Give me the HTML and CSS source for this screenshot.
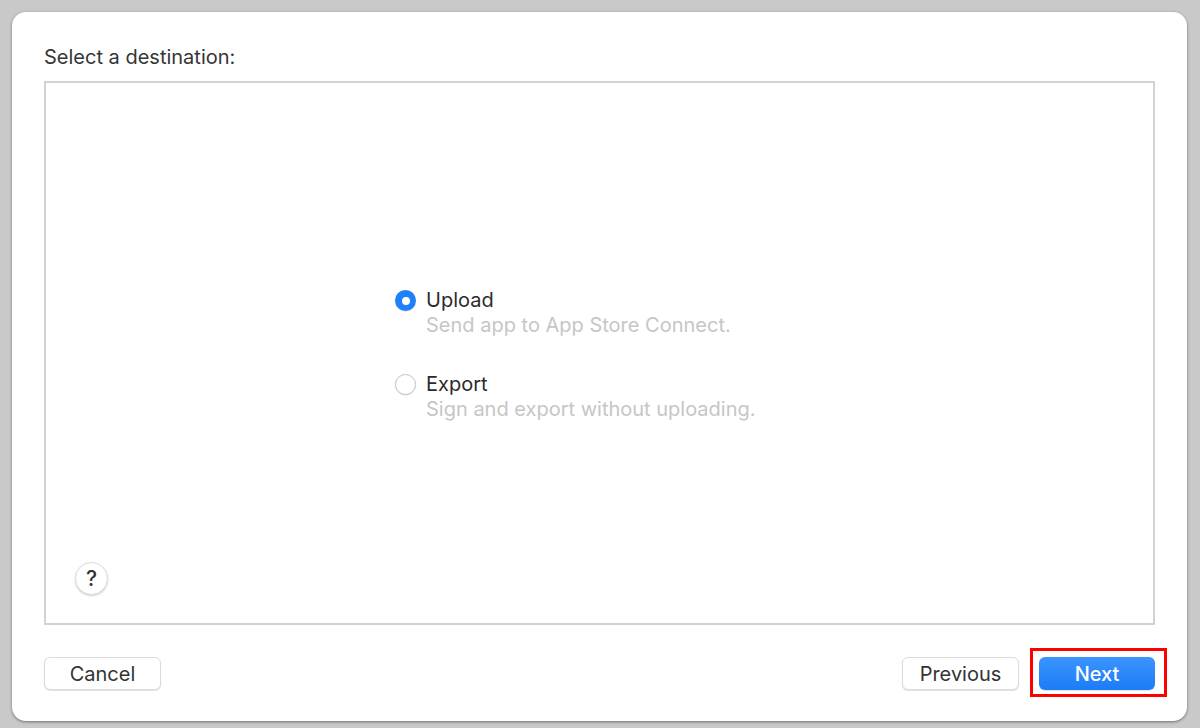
FILE: index.html
```html
<!DOCTYPE html>
<html lang="en">
<head>
<meta charset="UTF-8">
<title>Select a destination</title>
<link rel="stylesheet" href="styles.css">
</head>
<body>
<div class="dialog">
    <div class="title">Select a destination:</div>
    <div class="panel">
        <div class="options">
            <div class="option">
                <span class="radio checked"></span>
                <div class="option-text">
                    <div class="option-label">Upload</div>
                    <div class="option-sub">Send app to App Store Connect.</div>
                </div>
            </div>
            <div class="option">
                <span class="radio"></span>
                <div class="option-text">
                    <div class="option-label">Export</div>
                    <div class="option-sub">Sign and export without uploading.</div>
                </div>
            </div>
        </div>
        <button class="help" type="button">?</button>
    </div>
    <div class="footer">
        <button class="btn" type="button">Cancel</button>
        <div class="footer-right">
            <button class="btn" type="button">Previous</button>
            <span class="highlight"><button class="btn primary" type="button">Next</button></span>
        </div>
    </div>
</div>
</body>
</html>
```

FILE: styles.css
```css
body {
    margin: 0;
    height: 728px;
    box-sizing: border-box;
    padding: 12px 13px 7px 12px;
    background: #c9c9c9;
    font-family: Inter, "Liberation Sans", sans-serif;
    color: #2b2b2b;
}
.dialog {
    height: 709px;
    box-sizing: border-box;
    background: #fff;
    border-radius: 14px;
    box-shadow: 0 1px 3px rgba(0, 0, 0, 0.45);
    padding: 34px 32px 0 32px;
    display: flex;
    flex-direction: column;
}
.title {
    font-size: 20px;
    line-height: 22px;
    color: #363636;
    margin-bottom: 13px;
}
.panel {
    height: 544px;
    box-sizing: border-box;
    border: 2px solid #d2d2d2;
    display: flex;
    flex-direction: column;
    justify-content: space-between;
    padding: 206px 0 28px 29px;
}
.options {
    padding-left: 320px;
    display: flex;
    flex-direction: column;
    gap: 35px;
}
.option {
    display: flex;
    gap: 10px;
    align-items: flex-start;
}
.radio {
    width: 21px;
    height: 21px;
    box-sizing: border-box;
    border-radius: 50%;
    border: 1px solid #c4c4c4;
    background: #fff;
    box-shadow: 0 0.5px 1px rgba(0, 0, 0, 0.12);
    margin-top: 1px;
    display: flex;
    align-items: center;
    justify-content: center;
}
.radio.checked {
    border: none;
    background: #1f80fc;
}
.radio.checked::after {
    content: "";
    width: 8px;
    height: 8px;
    border-radius: 50%;
    background: #fff;
}
.option-label {
    font-size: 20px;
    line-height: 22px;
    color: #2b2b2b;
}
.option-sub {
    font-size: 20px;
    line-height: 26px;
    color: #c6c6c6;
    margin-top: 1px;
}
.help {
    width: 33px;
    height: 33px;
    border-radius: 50%;
    border: 1px solid #dcdcdc;
    background: #fff;
    box-shadow: 0 1px 2px rgba(0, 0, 0, 0.18);
    font-family: Inter, "Liberation Sans", sans-serif;
    font-size: 21px;
    font-weight: 500;
    color: #333;
    padding: 0;
    line-height: 31px;
}
.footer {
    margin-top: 32px;
    display: flex;
    justify-content: space-between;
    align-items: flex-start;
}
.footer-right {
    display: flex;
    gap: 20px;
    align-items: flex-start;
}
.btn {
    width: 117px;
    height: 33px;
    border-radius: 6px;
    border: 1px solid #dadada;
    background: #fff;
    box-shadow: 0 1px 1px rgba(0, 0, 0, 0.12);
    font-family: Inter, "Liberation Sans", sans-serif;
    font-size: 20px;
    color: #333;
    padding: 0;
}
.btn.primary {
    width: 116px;
    border: none;
    background: linear-gradient(#3b95ff, #1b7cf6);
    color: #fff;
    font-weight: 500;
    display: block;
}
.highlight {
    display: block;
    border: 3px solid #f00;
    padding: 6px 9px 4px 6px;
    margin: -9px -12px -7px -9px;
}
```
